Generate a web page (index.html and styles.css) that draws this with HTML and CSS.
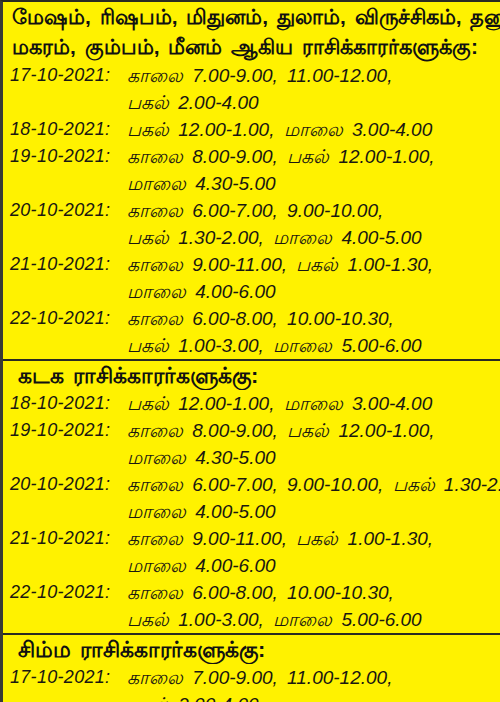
FILE: index.html
```html
<!DOCTYPE html>
<html lang="ta">
<head>
<meta charset="utf-8">
<link rel="stylesheet" href="styles.css">
</head>
<body>
<div class="page">
  <section class="block">
    <div class="head head-main">
      <div class="hl">மேஷம், ரிஷபம், மிதுனம், துலாம், விருச்சிகம், தனுசு,</div>
      <div class="hl">மகரம், கும்பம், மீனம் ஆகிய ராசிக்காரர்களுக்கு:</div>
    </div>
    <div class="grid">
      <div class="d">17-10-2021:</div><div class="t">காலை 7.00-9.00, 11.00-12.00,</div>
      <div class="d"></div><div class="t">பகல் 2.00-4.00</div>
      <div class="d">18-10-2021:</div><div class="t">பகல் 12.00-1.00, மாலை 3.00-4.00</div>
      <div class="d">19-10-2021:</div><div class="t">காலை 8.00-9.00, பகல் 12.00-1.00,</div>
      <div class="d"></div><div class="t">மாலை 4.30-5.00</div>
      <div class="d">20-10-2021:</div><div class="t">காலை 6.00-7.00, 9.00-10.00,</div>
      <div class="d"></div><div class="t">பகல் 1.30-2.00, மாலை 4.00-5.00</div>
      <div class="d">21-10-2021:</div><div class="t">காலை 9.00-11.00, பகல் 1.00-1.30,</div>
      <div class="d"></div><div class="t">மாலை 4.00-6.00</div>
      <div class="d">22-10-2021:</div><div class="t">காலை 6.00-8.00, 10.00-10.30,</div>
      <div class="d"></div><div class="t">பகல் 1.00-3.00, மாலை 5.00-6.00</div>
    </div>
  </section>
  <section class="block">
    <div class="head head-sub"><div class="hl">கடக ராசிக்காரர்களுக்கு:</div></div>
    <div class="grid">
      <div class="d">18-10-2021:</div><div class="t">பகல் 12.00-1.00, மாலை 3.00-4.00</div>
      <div class="d">19-10-2021:</div><div class="t">காலை 8.00-9.00, பகல் 12.00-1.00,</div>
      <div class="d"></div><div class="t">மாலை 4.30-5.00</div>
      <div class="d">20-10-2021:</div><div class="t">காலை 6.00-7.00, 9.00-10.00, பகல் 1.30-2.00,</div>
      <div class="d"></div><div class="t">மாலை 4.00-5.00</div>
      <div class="d">21-10-2021:</div><div class="t">காலை 9.00-11.00, பகல் 1.00-1.30,</div>
      <div class="d"></div><div class="t">மாலை 4.00-6.00</div>
      <div class="d">22-10-2021:</div><div class="t">காலை 6.00-8.00, 10.00-10.30,</div>
      <div class="d"></div><div class="t">பகல் 1.00-3.00, மாலை 5.00-6.00</div>
    </div>
  </section>
  <section class="block last">
    <div class="head head-sub"><div class="hl">சிம்ம ராசிக்காரர்களுக்கு:</div></div>
    <div class="grid">
      <div class="d">17-10-2021:</div><div class="t">காலை 7.00-9.00, 11.00-12.00,</div>
      <div class="d"></div><div class="t">பகல் 2.00-4.00</div>
    </div>
  </section>
</div>
</body>
</html>
```
FILE: styles.css
```css
html, body {
  margin: 0;
  padding: 0;
  background: #fff200;
}
body {
  width: 500px;
  height: 702px;
  overflow: hidden;
  font-family: "Liberation Sans", "Noto Sans", sans-serif;
  color: #1a1810;
}
.page {
  border-top: 2px solid #2a2a22;
  border-left: 3px solid #3a3a34;
  background: #fff200;
  min-height: 700px;
}
.block {
  border-bottom: 2px solid #2a2a22;
}
.block.last {
  border-bottom: none;
}
.head {
  font-weight: bold;
  word-spacing: 3px;
  white-space: nowrap;
  overflow: hidden;
  color: #111;
}
.head-main {
  font-size: 21px;
  padding-left: 9px;
}
.head-main .hl {
  height: 30px;
  line-height: 30px;
}
.head-sub {
  font-size: 22px;
  padding-left: 15px;
}
.head-sub .hl {
  height: 29px;
  line-height: 29px;
}
.grid {
  display: grid;
  grid-template-columns: 124px 1fr;
  font-style: italic;
}
.d, .t {
  height: 27px;
  line-height: 27px;
  white-space: nowrap;
  overflow: hidden;
}
.d {
  padding-left: 7px;
  font-size: 18px;
  letter-spacing: 0.3px;
}
.t {
  font-size: 19px;
  word-spacing: 4px;
}
```
